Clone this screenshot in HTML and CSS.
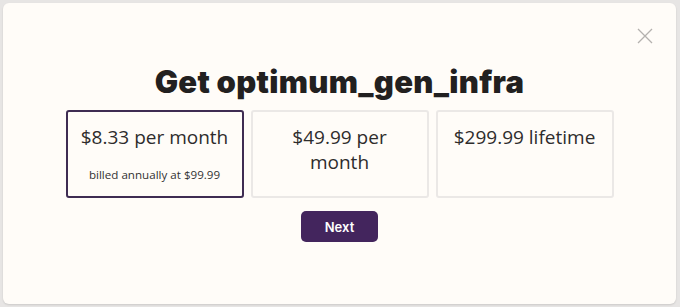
FILE: index.html
```html
<!DOCTYPE html>
<html>
<head>
<meta charset="utf-8">
<link rel="stylesheet" href="styles.css">
</head>
<body>
<div class="backdrop">
  <div class="modal">
    <button class="close" aria-label="Close">
      <svg width="16" height="16" viewBox="0 0 16 16"><path d="M1 1 L15 15 M15 1 L1 15" stroke="#b4b1ae" stroke-width="1.3" fill="none"/></svg>
    </button>
    <h1 class="title">Get optimum_gen_infra</h1>
    <div class="plans">
      <div class="plan selected">
        <div class="price">$8.33 per month</div>
        <div class="note">billed annually at $99.99</div>
      </div>
      <div class="plan">
        <div class="price">$49.99 per month</div>
      </div>
      <div class="plan">
        <div class="price">$299.99 lifetime</div>
      </div>
    </div>
    <button class="next">Next</button>
  </div>
</div>
</body>
</html>
```
FILE: styles.css
```css
html, body {
  margin: 0;
  padding: 0;
}
body {
  width: 680px;
  height: 307px;
  background: #e7e5e4;
  overflow: hidden;
}
.backdrop {
  padding: 3px 4px 3px 3px;
  height: 301px;
}
.modal {
  position: relative;
  height: 301px;
  background: #fffcf8;
  border-radius: 6px;
  box-shadow: 0 1px 2px rgba(0,0,0,0.12);
  display: flex;
  flex-direction: column;
  align-items: center;
  box-sizing: border-box;
  padding-top: 60px;
}
.close {
  position: absolute;
  top: 25px;
  right: 23px;
  background: none;
  border: 0;
  padding: 0;
  width: 16px;
  height: 16px;
  cursor: pointer;
}
.title {
  margin: 0;
  font-family: "Inter", "DejaVu Sans", sans-serif;
  font-weight: 900;
  font-size: 31px;
  line-height: 38px;
  color: #222020;
  letter-spacing: 0.3px;
}
.plans {
  display: flex;
  gap: 7px;
  margin-top: 9px;
}
.plan {
  width: 178px;
  height: 88px;
  box-sizing: border-box;
  border: 2px solid #ebe8e6;
  border-radius: 3px;
  padding: 13px 10px 0;
  text-align: center;
  color: #2e2c2c;
  font-family: "Open Sans", "Lato", sans-serif;
}
.plan.selected {
  border-color: #3f2c52;
}
.price {
  font-size: 19px;
  line-height: 25px;
}
.note {
  font-size: 11.6px;
  margin-top: 17px;
  color: #333;
}
.next {
  margin-top: 13px;
  width: 77px;
  height: 31px;
  border: 0;
  border-radius: 5px;
  background: #43255d;
  color: #fff;
  font-family: "Inter", sans-serif;
  font-weight: 600;
  font-size: 13px;
}
```
